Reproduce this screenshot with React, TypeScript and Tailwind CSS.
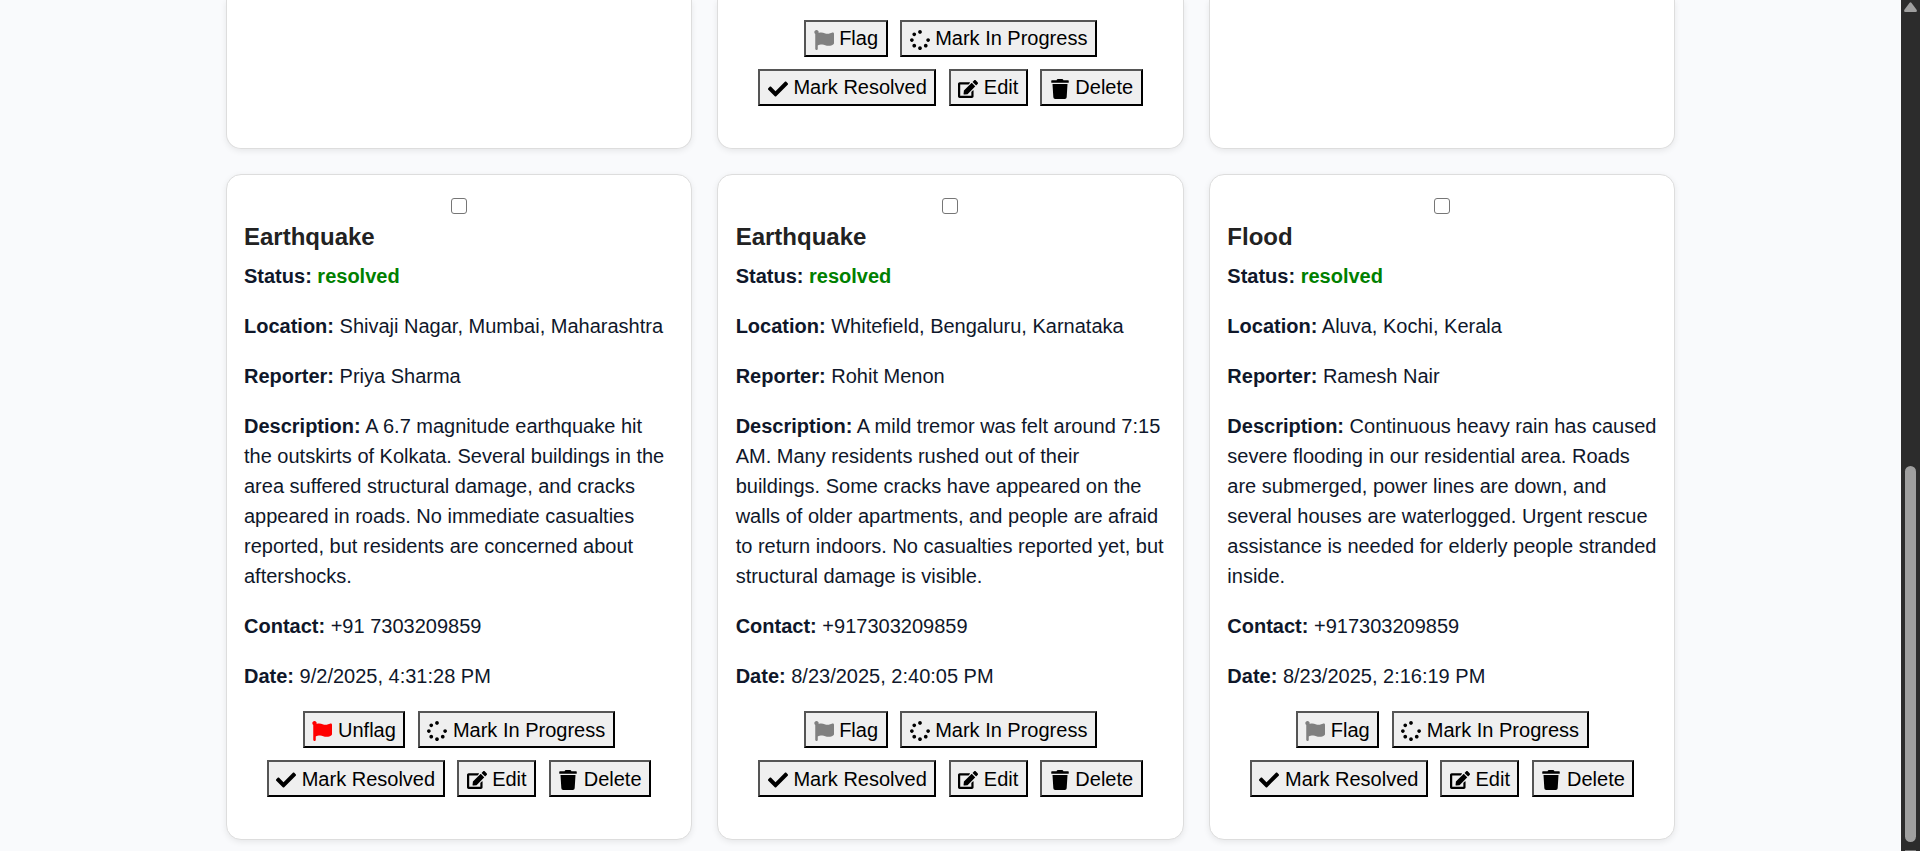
import type { ReactNode } from "react";
import { FaCheck, FaEdit, FaFlag, FaSpinner, FaTrash } from "react-icons/fa";

type Report = {
  title: string;
  location: string;
  reporter: string;
  description: string;
  contact: string;
  date: string;
  flagged: boolean;
};

const reports: Report[] = [
  {
    title: "Earthquake",
    location: "Shivaji Nagar, Mumbai, Maharashtra",
    reporter: "Priya Sharma",
    description:
      "A 6.7 magnitude earthquake hit the outskirts of Kolkata. Several buildings in the area suffered structural damage, and cracks appeared in roads. No immediate casualties reported, but residents are concerned about aftershocks.",
    contact: "+91 7303209859",
    date: "9/2/2025, 4:31:28 PM",
    flagged: true,
  },
  {
    title: "Earthquake",
    location: "Whitefield, Bengaluru, Karnataka",
    reporter: "Rohit Menon",
    description:
      "A mild tremor was felt around 7:15 AM. Many residents rushed out of their buildings. Some cracks have appeared on the walls of older apartments, and people are afraid to return indoors. No casualties reported yet, but structural damage is visible.",
    contact: "+917303209859",
    date: "8/23/2025, 2:40:05 PM",
    flagged: false,
  },
  {
    title: "Flood",
    location: "Aluva, Kochi, Kerala",
    reporter: "Ramesh Nair",
    description:
      "Continuous heavy rain has caused severe flooding in our residential area. Roads are submerged, power lines are down, and several houses are waterlogged. Urgent rescue assistance is needed for elderly people stranded inside.",
    contact: "+917303209859",
    date: "8/23/2025, 2:16:19 PM",
    flagged: false,
  },
];

function ActionButton({ icon, children }: { icon: ReactNode; children: string }) {
  return (
    <button className="border-2 border-t-[#555] border-l-[#555] border-r-black border-b-black bg-[#efefef] px-[7.5px] py-[1.5px] text-[20px] leading-[30px] whitespace-nowrap text-black">
      {icon} {children}
    </button>
  );
}

function Actions({ flagged }: { flagged: boolean }) {
  const icon = "inline-block size-5 align-middle";
  return (
    <div className="flex flex-wrap justify-center gap-x-[12.5px] gap-y-3">
      <ActionButton
        icon={<FaFlag className={flagged ? "inline-block size-5 align-middle text-[#ff0000]" : "inline-block size-5 align-middle text-[#808080]"} />}
      >
        {flagged ? "Unflag" : "Flag"}
      </ActionButton>
      <ActionButton icon={<FaSpinner className={icon} />}>Mark In Progress</ActionButton>
      <ActionButton icon={<FaCheck className={icon} />}>Mark Resolved</ActionButton>
      <ActionButton icon={<FaEdit className={icon} />}>Edit</ActionButton>
      <ActionButton icon={<FaTrash className={icon} />}>Delete</ActionButton>
    </div>
  );
}

function Field({ label, children }: { label: string; children: ReactNode }) {
  return (
    <p className="mb-5">
      <strong>{label}:</strong> {children}
    </p>
  );
}

function ReportCard({ report }: { report: Report }) {
  return (
    <article className="h-[666px] rounded-[15px] border border-[#ddd] bg-white px-[17.5px] pt-[23px] shadow-[0_2px_6px_rgba(0,0,0,0.08)]">
      <input
        type="checkbox"
        className="mx-auto block size-4 appearance-none rounded-[3px] border border-[#767676] bg-white"
      />
      <h3 className="mt-2 mb-[9px] text-[24px] leading-[30px] font-bold text-[#222]">{report.title}</h3>
      <Field label="Status">
        <span className="font-bold text-[#008000]">resolved</span>
      </Field>
      <Field label="Location">{report.location}</Field>
      <Field label="Reporter">{report.reporter}</Field>
      <Field label="Description">{report.description}</Field>
      <Field label="Contact">{report.contact}</Field>
      <Field label="Date">{report.date}</Field>
      <Actions flagged={report.flagged} />
    </article>
  );
}

function CardEnd({ children }: { children?: ReactNode }) {
  return (
    <div className="h-[149px] rounded-b-[15px] border border-t-0 border-[#ddd] bg-white px-[17.5px] pt-[19.6px] shadow-[0_2px_6px_rgba(0,0,0,0.08)]">
      {children}
    </div>
  );
}

function Scrollbar() {
  return (
    <div className="flex w-[19px] flex-col items-center bg-[#2c2c2c] pt-[2px]">
      <svg className="h-[10px] w-[13px]" viewBox="0 0 13 10" fill="#9f9f9f">
        <path d="M5.6 .8Q6.5-.3 7.4.8L12.6 7.8Q13.4 9.8 11.8 10H1.2Q-.4 9.8.4 7.8Z" />
      </svg>
      <div className="mt-[454px] h-[376px] w-[11px] rounded-full bg-[#9f9f9f]" />
      <div className="mt-[8px] h-px w-[11px] bg-[#777]" />
    </div>
  );
}

export default function App() {
  return (
    <div className="flex h-[851px] w-full overflow-hidden bg-[#f9fafc] font-['Liberation_Sans',Arial,sans-serif] text-[20px] leading-[30px] text-[#0f172a]">
      <main className="flex-1">
        <div className="mx-auto grid w-[1450px] grid-cols-3 gap-[25px]">
          <CardEnd />
          <CardEnd>
            <Actions flagged={false} />
          </CardEnd>
          <CardEnd />
          {reports.map((report) => (
            <ReportCard key={report.date} report={report} />
          ))}
        </div>
      </main>
      <Scrollbar />
    </div>
  );
}
